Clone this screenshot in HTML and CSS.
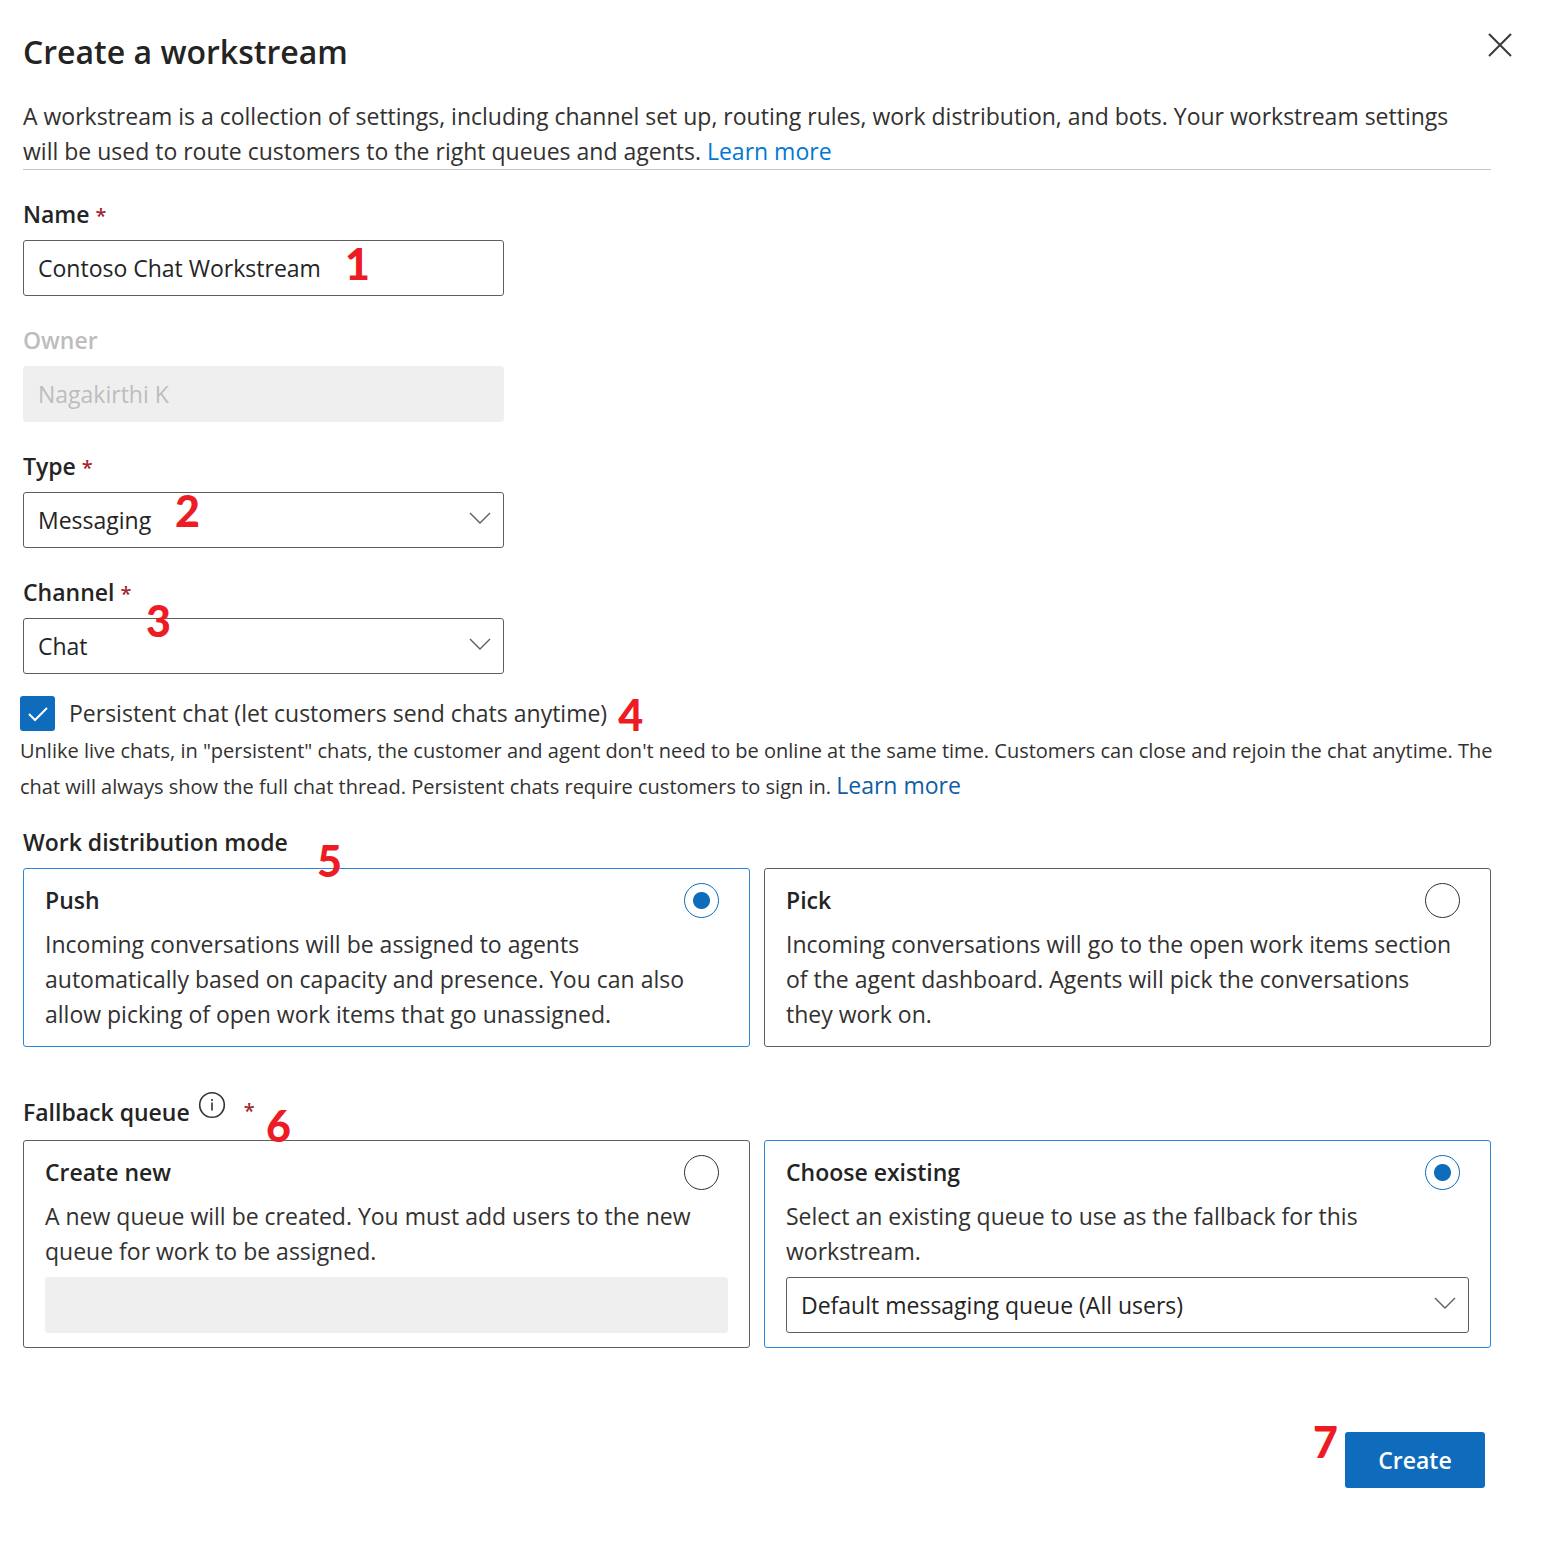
FILE: index.html
```html
<!DOCTYPE html>
<html lang="en">
<head>
<meta charset="utf-8">
<meta name="viewport" content="width=device-width, initial-scale=1">
<title>Create a workstream</title>
<link rel="stylesheet" href="styles.css">
</head>
<body>
<main class="panel">
  <header class="panel-header">
    <h1 class="panel-title">Create a workstream</h1>
    <button class="close" type="button" aria-label="Close">
      <svg width="24" height="24" viewBox="0 0 24 24" fill="none" stroke="#3b3a39" stroke-width="2"><path d="M1 1 23 23M23 1 1 23"/></svg>
    </button>
  </header>

  <form class="form">
    <p class="intro">A workstream is a collection of settings, including channel set up, routing rules, work distribution, and bots. Your workstream settings will be used to route customers to the right queues and agents. <a class="link" href="#">Learn more</a></p>

    <div class="field">
      <label class="label" for="name">Name <span class="required">*</span></label>
      <input class="control" id="name" type="text" value="Contoso Chat Workstream" required>
      <span class="step step-1">1</span>
    </div>

    <div class="field">
      <label class="label label-disabled" for="owner">Owner</label>
      <input class="control" id="owner" type="text" value="Nagakirthi K" disabled>
    </div>

    <div class="field">
      <label class="label" for="type">Type <span class="required">*</span></label>
      <div class="select">
        <select class="control" id="type"><option>Messaging</option></select>
        <svg class="chevron" width="22" height="12" viewBox="0 0 22 12" fill="none" stroke="#605e5c" stroke-width="1.4"><path d="M1 1 11 11 21 1"/></svg>
      </div>
      <span class="step step-2">2</span>
    </div>

    <div class="field">
      <label class="label" for="channel">Channel <span class="required">*</span></label>
      <div class="select">
        <select class="control" id="channel"><option>Chat</option></select>
        <svg class="chevron" width="22" height="12" viewBox="0 0 22 12" fill="none" stroke="#605e5c" stroke-width="1.4"><path d="M1 1 11 11 21 1"/></svg>
      </div>
      <span class="step step-3">3</span>
    </div>

    <div class="persistent">
      <div class="check-row">
        <span class="check">
          <input class="check-input" id="persistent" type="checkbox" checked>
          <svg class="check-mark" width="20" height="16" viewBox="0 0 20 16" fill="none" stroke="#fff" stroke-width="2"><path d="M1 8 7 14 19 2"/></svg>
        </span>
        <label for="persistent">Persistent chat (let customers send chats anytime)</label>
        <span class="step step-4">4</span>
      </div>
      <p class="help">Unlike live chats, in "persistent" chats, the customer and agent don't need to be online at the same time. Customers can close and rejoin the chat anytime. The chat will always show the full chat thread. Persistent chats require customers to sign in. <a class="help-link" href="#">Learn more</a></p>
    </div>

    <section class="group" role="radiogroup" aria-labelledby="mode-title">
      <h2 class="label" id="mode-title">Work distribution mode</h2>
      <span class="step step-5">5</span>
      <div class="cards">
        <div class="card card-selected">
          <div class="card-head">
            <label class="card-title" for="push">Push</label>
            <input class="radio" id="push" type="radio" name="mode" checked>
          </div>
          <p class="card-text">Incoming conversations will be assigned to agents automatically based on capacity and presence. You can also allow picking of open work items that go unassigned.</p>
        </div>
        <div class="card">
          <div class="card-head">
            <label class="card-title" for="pick">Pick</label>
            <input class="radio" id="pick" type="radio" name="mode">
          </div>
          <p class="card-text">Incoming conversations will go to the open work items section of the agent dashboard. Agents will pick the conversations they work on.</p>
        </div>
      </div>
    </section>

    <section class="group group-queue" role="radiogroup" aria-labelledby="queue-title">
      <div class="queue-head">
        <h2 class="label" id="queue-title">Fallback queue</h2>
        <svg class="info" width="28" height="28" viewBox="0 0 28 28" fill="none" stroke="#323130" stroke-width="1.6"><circle cx="14" cy="14" r="12.3"/><path d="M14 11.5V19.5M14 8V10"/></svg>
        <span class="required">*</span>
      </div>
      <span class="step step-6">6</span>
      <div class="cards">
        <div class="card">
          <div class="card-head">
            <label class="card-title" for="create-new">Create new</label>
            <input class="radio" id="create-new" type="radio" name="queue">
          </div>
          <p class="card-text">A new queue will be created. You must add users to the new queue for work to be assigned.</p>
          <input class="control card-control" type="text" aria-label="New queue name" disabled>
        </div>
        <div class="card card-selected">
          <div class="card-head">
            <label class="card-title" for="existing">Choose existing</label>
            <input class="radio" id="existing" type="radio" name="queue" checked>
          </div>
          <p class="card-text">Select an existing queue to use as the fallback for this workstream.</p>
          <div class="select card-control">
            <select class="control" aria-label="Existing queue"><option>Default messaging queue (All users)</option></select>
            <svg class="chevron" width="22" height="12" viewBox="0 0 22 12" fill="none" stroke="#605e5c" stroke-width="1.4"><path d="M1 1 11 11 21 1"/></svg>
          </div>
        </div>
      </div>
    </section>

    <footer class="actions">
      <span class="create">
        <button class="primary" type="submit">Create</button>
        <span class="step step-7">7</span>
      </span>
    </footer>
  </form>
</main>
</body>
</html>
```

FILE: styles.css
```css
* { box-sizing: border-box; }

body {
  margin: 0;
  background: #fff;
  color: #323130;
  font-family: "Open Sans", "Noto Sans", sans-serif;
  font-size: 23px;
  line-height: 35px;
}

h1, h2, p { margin: 0; }

input, select, button { font: inherit; }

.panel-header {
  display: flex;
  justify-content: space-between;
  padding: 28px 39px 0 23px;
}

.panel-title {
  color: #242424;
  font-size: 32px;
  font-weight: 600;
  line-height: 48px;
}

.close {
  display: flex;
  height: 34px;
  padding: 5px 0;
  border: 0;
  background: none;
}

.form { padding: 23px 60px 66px 23px; }

.intro {
  padding-right: 12px;
  border-bottom: 1px solid #c8c6c4;
}

.link { color: #0078d4; text-decoration: none; }

.field {
  position: relative;
  display: flex;
  flex-direction: column;
  gap: 8px;
  width: 481px;
  max-width: 100%;
  margin-top: 27px;
}

.label {
  color: #242424;
  font-size: 23px;
  font-weight: 600;
  line-height: 35px;
}

.label-disabled { color: #bdbdbd; }

.required {
  color: #a4262c;
  font-size: 20px;
  font-weight: 600;
  line-height: 32px;
}

.control {
  display: block;
  width: 100%;
  height: 56px;
  padding: 0 14px;
  border: 1px solid #605e5c;
  border-radius: 3px;
  background: #fff;
  color: #242424;
  appearance: none;
}

.control:disabled {
  border-color: #efefef;
  background: #efefef;
  color: #bdbdbd;
}

.select { position: relative; }

.chevron {
  position: absolute;
  top: 20px;
  right: 13px;
  pointer-events: none;
}

.persistent { margin: 22px -8px 0 -3px; }

.check-row {
  position: relative;
  display: flex;
  align-items: center;
  gap: 14px;
  width: fit-content;
}

.check { position: relative; display: flex; }

.check-input {
  width: 35px;
  height: 35px;
  margin: 0;
  border-radius: 3px;
  background: #0f6cbd;
  appearance: none;
}

.check-mark {
  position: absolute;
  top: 10px;
  left: 8px;
  pointer-events: none;
}

.help {
  margin-top: 2px;
  font-size: 20px;
  line-height: 36px;
}

.help-link {
  color: #115ea3;
  font-size: 23px;
  line-height: 24px;
  text-decoration: none;
}

.group {
  position: relative;
  display: flex;
  flex-direction: column;
  gap: 8px;
  margin-top: 20px;
}

.group-queue { gap: 10px; margin-top: 48px; }

.queue-head { display: flex; }

.info { margin: -4px 18px 0 8px; }

.cards {
  display: grid;
  grid-template-columns: 1fr 1fr;
  gap: 14px;
}

.card {
  padding: 14px 21px;
  border: 1px solid #605e5c;
  border-radius: 3px;
}

.card-selected { border-color: #2b88d8; }

.card-head {
  display: flex;
  justify-content: space-between;
  padding-right: 9px;
}

.card-title { color: #242424; font-weight: 600; }

.radio {
  width: 35px;
  height: 35px;
  margin: 0;
  border: 1px solid #323130;
  border-radius: 50%;
  background: #fff;
  appearance: none;
}

.radio:checked {
  border-color: #0f6cbd;
  background: radial-gradient(circle, #0f6cbd 8px, #fff 9px);
}

.card-text { margin-top: 9px; padding-right: 12px; }

.card-control { margin-top: 8px; }

.actions {
  display: flex;
  justify-content: flex-end;
  margin-top: 84px;
  padding-right: 6px;
}

.create { position: relative; }

.primary {
  display: block;
  width: 140px;
  height: 56px;
  border: 0;
  border-radius: 3px;
  background: #0f6cbd;
  color: #fff;
  font-weight: 600;
}

/* Numbered callouts laid over the form */
.step {
  position: absolute;
  color: #ed1c24;
  font-family: Lato, "Open Sans", sans-serif;
  font-size: 43px;
  font-weight: 900;
  line-height: 44px;
  pointer-events: none;
}

.step-1 { top: 45px; left: 322px; }
.step-2 { top: 40px; left: 152px; }
.step-3 { top: 24px; left: 123px; }
.step-4 { top: -3px; right: -36px; }
.step-5 { top: 14px; left: 294px; }
.step-6 { top: 9px; left: 243px; }
.step-7 { top: -12px; left: -32px; }
```
